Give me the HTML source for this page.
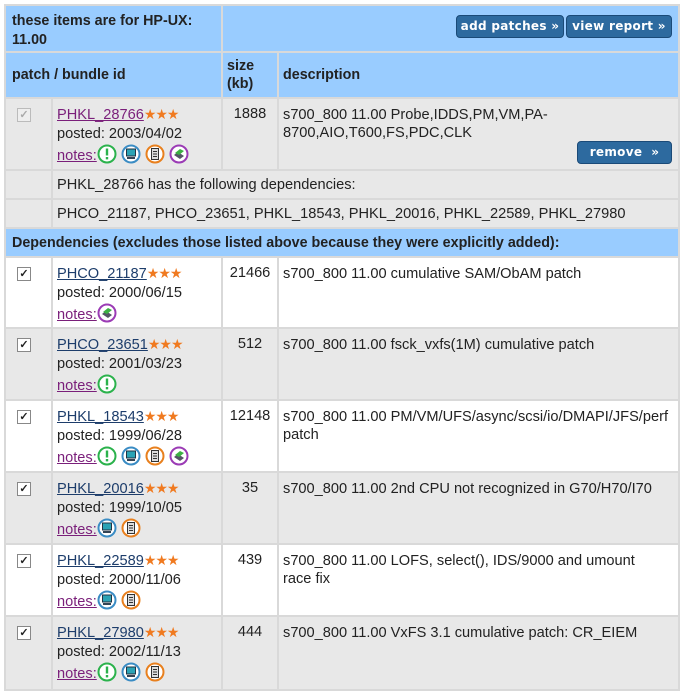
<!DOCTYPE html>
<html><head><style>
body{margin:0;background:#fff;font-family:"Liberation Sans",Arial,sans-serif;font-size:14.6px;color:#222;}
table{position:absolute;left:4px;top:4px;border-collapse:collapse;width:674px;table-layout:fixed;}
td{border:2px solid #d9d9d9;vertical-align:top;padding:0 0 0 4px;}
.h{background:#99ccff;font-weight:bold;}
.h td{font-size:14.3px}
.g td{background:#e8e8e8;}
.w td{background:#fff;}
a{color:#222;}
a.v{color:#7a1f7a;}
a.b{color:#1d3d6b;}
.st{color:#f07a20;font-size:14px;letter-spacing:-1px;}
.cb{display:inline-block;width:12px;height:12px;border:1px solid #888;background:#fff;margin:9px 0 0 7px;font-size:11px;line-height:12px;text-align:center;font-weight:bold;}
.btn{position:absolute;background:#2d6a9f;border:1px solid #1a4a78;border-radius:4px;color:#fff;font-weight:bold;font-size:12px;text-align:center;line-height:21px;height:21px;font-family:"DejaVu Sans",sans-serif;letter-spacing:0.3px}
svg{vertical-align:-4px}
.p{padding-top:6px;line-height:19px}
.sz{text-align:center;padding:7px 0 0 0}
.ds{padding-top:7px;line-height:18px}
</style></head><body>
<table>
<colgroup><col style="width:47px"><col style="width:170px"><col style="width:56px"><col style="width:401px"></colgroup>
<tr class="h" style="height:47px"><td colspan="2" style="padding:6px 0 0 6px;line-height:19px">these items are for HP-UX:<br>11.00</td><td colspan="2"></td></tr>
<tr class="h" style="height:46px"><td colspan="2" style="vertical-align:middle;padding-left:6px">patch / bundle id</td><td style="vertical-align:middle;line-height:18px">size<br>(kb)</td><td style="vertical-align:middle">description</td></tr>
<tr class="g" style="height:72px"><td><span class="cb" style="color:#aaa;border-color:#bbb;background:#eee">✓</span></td><td class="p"><a class="v" href="#">PHKL_28766</a><span class="st">★★★</span><br>posted: 2003/04/02<br><a class="v" href="#">notes:</a> ICONS_GBOP</td><td class="sz">1888</td><td class="ds">s700_800 11.00 Probe,IDDS,PM,VM,PA-<br>8700,AIO,T600,FS,PDC,CLK</td></tr>
<tr class="g" style="height:29px"><td></td><td colspan="3" style="vertical-align:middle">PHKL_28766 has the following dependencies:</td></tr>
<tr class="g" style="height:29px"><td></td><td colspan="3" style="vertical-align:middle">PHCO_21187, PHCO_23651, PHKL_18543, PHKL_20016, PHKL_22589, PHKL_27980</td></tr>
<tr class="h" style="height:29px"><td colspan="4" style="vertical-align:middle;padding-left:6px">Dependencies (excludes those listed above because they were explicitly added):</td></tr>
<tr class="w" style="height:71px"><td><span class="cb">✓</span></td><td class="p"><a class="b" href="#">PHCO_21187</a><span class="st">★★★</span><br>posted: 2000/06/15<br><a class="v" href="#">notes:</a>ICONS_P</td><td class="sz">21466</td><td class="ds">s700_800 11.00 cumulative SAM/ObAM patch</td></tr>
<tr class="g" style="height:72px"><td><span class="cb">✓</span></td><td class="p"><a class="b" href="#">PHCO_23651</a><span class="st">★★★</span><br>posted: 2001/03/23<br><a class="v" href="#">notes:</a>ICONS_G</td><td class="sz">512</td><td class="ds">s700_800 11.00 fsck_vxfs(1M) cumulative patch</td></tr>
<tr class="w" style="height:72px"><td><span class="cb">✓</span></td><td class="p"><a class="b" href="#">PHKL_18543</a><span class="st">★★★</span><br>posted: 1999/06/28<br><a class="v" href="#">notes:</a>ICONS_GBOP</td><td class="sz">12148</td><td class="ds">s700_800 11.00 PM/VM/UFS/async/scsi/io/DMAPI/JFS/perf<br>patch</td></tr>
<tr class="g" style="height:72px"><td><span class="cb">✓</span></td><td class="p"><a class="b" href="#">PHKL_20016</a><span class="st">★★★</span><br>posted: 1999/10/05<br><a class="v" href="#">notes:</a>ICONS_BO</td><td class="sz">35</td><td class="ds">s700_800 11.00 2nd CPU not recognized in G70/H70/I70</td></tr>
<tr class="w" style="height:72px"><td><span class="cb">✓</span></td><td class="p"><a class="b" href="#">PHKL_22589</a><span class="st">★★★</span><br>posted: 2000/11/06<br><a class="v" href="#">notes:</a>ICONS_BO</td><td class="sz">439</td><td class="ds">s700_800 11.00 LOFS, select(), IDS/9000 and umount<br>race fix</td></tr>
<tr class="g" style="height:74px"><td><span class="cb">✓</span></td><td class="p"><a class="b" href="#">PHKL_27980</a><span class="st">★★★</span><br>posted: 2002/11/13<br><a class="v" href="#">notes:</a>ICONS_GBO</td><td class="sz">444</td><td class="ds">s700_800 11.00 VxFS 3.1 cumulative patch: CR_EIEM</td></tr>
</table>
<div class="btn" style="left:456px;top:15px;width:106px">add patches »</div>
<div class="btn" style="left:566px;top:15px;width:104px">view report »</div>
<div class="btn" style="left:577px;top:141px;width:93px">remove &nbsp;»</div>
<script>
var G='<svg width="20" height="20"><circle cx="10" cy="10" r="8.5" fill="#fff" stroke="#2bb24c" stroke-width="2"/><rect x="8.8" y="4.5" width="2.4" height="7" fill="#2bb24c"/><rect x="8.8" y="13" width="2.4" height="2.4" fill="#2bb24c"/></svg>';
var B='<svg width="20" height="20"><circle cx="10" cy="10" r="8.5" fill="#fff" stroke="#3a8cc4" stroke-width="2"/><rect x="5.5" y="5" width="9" height="7" fill="#2aa3b5" stroke="#234" stroke-width="1"/><rect x="6" y="13" width="8" height="2" fill="#345"/></svg>';
var O='<svg width="20" height="20"><circle cx="10" cy="10" r="8.5" fill="#fff" stroke="#e8801e" stroke-width="2"/><rect x="6.5" y="4.5" width="7" height="11" fill="#ddd" stroke="#333" stroke-width="1"/><path d="M8 7.5h4M8 10h4M8 12.5h4" stroke="#333"/></svg>';
var P='<svg width="20" height="20"><circle cx="10" cy="10" r="8.5" fill="#fff" stroke="#9b3bb5" stroke-width="2"/><path d="M5 11l6 4 4-3-6-4z" fill="#556"/><path d="M6 9l5-4 4 2-5 4z" fill="#3cb043"/></svg>';
var m={G:G,B:B,O:O,P:P};
document.body.innerHTML=document.body.innerHTML.replace(/ ?ICONS_([GBOP]+)/g,function(s,k){return k.split('').map(function(c){return m[c]}).join(' ')});
</script>
</body></html>
